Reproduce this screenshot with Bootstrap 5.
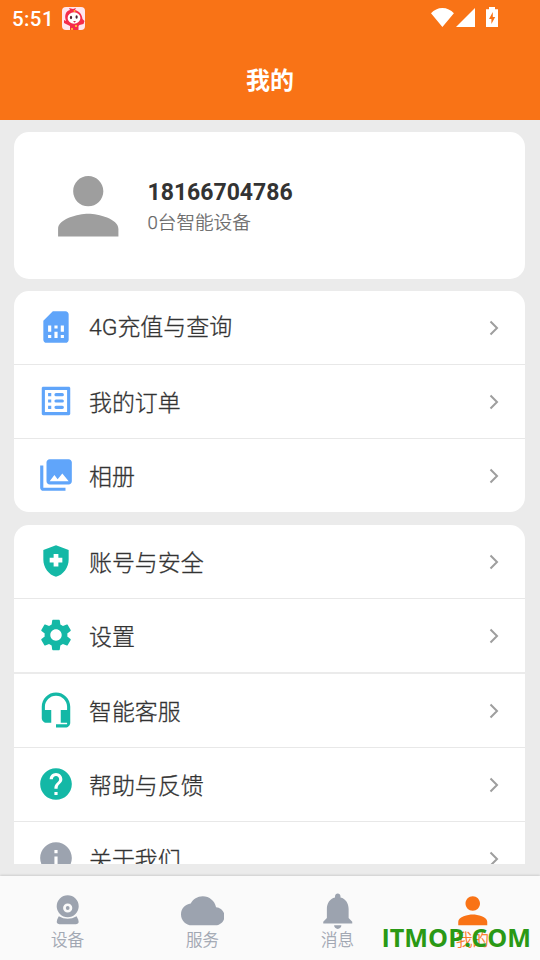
<!DOCTYPE html>
<html lang="zh-CN">
<head>
<meta charset="utf-8">
<meta name="viewport" content="width=device-width, initial-scale=1">
<title>我的</title>
<link href="https://cdn.jsdelivr.net/npm/bootstrap@5.3.0/dist/css/bootstrap.min.css" rel="stylesheet">
<style>
body{font-family:Roboto,"Noto Sans CJK SC",sans-serif;background:#ebebeb;color:#333;height:960px}
svg{display:block;fill:currentColor;flex:none}
.app-head{background:#f97316;height:120px}
.status-row{height:40px;padding:0 42px 0 12px}
.clock{font-size:20.5px;font-weight:500;line-height:38px;letter-spacing:.4px;width:50px}
.page-title{font-size:24px;font-weight:700;line-height:36px;padding-top:23px}
.scroll-area{height:756px;padding:12px 15px 12px 14px}
.panel{background:#fff;border-radius:15px}
.profile{height:147px;margin-bottom:12px;padding:1px 0 0 28.7px}
.profile svg{color:#9e9e9e}
.profile-text{margin:3px 0 0 14.3px}
.phone{font-size:23px;font-weight:700;line-height:30px}
.devices{font-size:18.6px;line-height:30px;color:#666;font-weight:300;-webkit-text-stroke:.25px #666}
.menu-a{height:221px;margin-bottom:13px}
.menu-b{height:339px;border-radius:15px 15px 0 0}
.menu-row{height:74px;flex:none;padding:0 26.5px 0 22.8px;border-bottom:1px solid #e8e8e8}
.menu-row.thick{height:75px;border-bottom-width:2px;border-color:#ebebeb}
.menu-row:last-child{border-color:transparent}
.menu-row svg.pic{margin-top:-1px}
.menu-row .label{font-size:22.95px;line-height:34px;margin:5px 0 0 14.2px;font-weight:300;-webkit-text-stroke:.3px #333}
.menu-a .menu-row:first-child .label{margin-top:1px}
.chev{fill:none;stroke:#9e9e9e;stroke-width:2;margin:1px 0 0 auto}
.blue{color:#60a5fa}
.teal{color:#14b8a6}
.slate{color:#9ca3af}
.tabs{height:84px;background:#fafafa;box-shadow:0 -1px 2px rgba(0,0,0,.12);padding-top:12.5px}
.tabs .tab{width:135px;font-size:16.5px;line-height:24px;color:#9ca3af;font-weight:300}
.tabs .tab span{margin-top:-3.5px;-webkit-text-stroke:.25px currentColor}
.tabs .tab.on{color:#f97316}
.stamp{right:9px;bottom:7px;font:700 25.2px/32px "Open Sans",sans-serif;color:#2a9915;white-space:nowrap}
</style>
</head>
<body class="overflow-hidden">
<header class="app-head text-white">
  <div class="status-row d-flex align-items-start">
    <span class="clock">5:51</span>
    <svg width="23" height="23" viewBox="0 0 23 23" style="margin-top:7px"><rect width="23" height="23" rx="4" fill="#ffe6ee"/><path fill="#f52c4b" d="M7 1l4 1 3-1-1 2c4 1 7 4 7.500 9l2 2-1 3-4 1-1 1v4H8v-4l-6-3 0-3 2 1C2 8 4 4 8 3z"/><ellipse cx="12" cy="11" rx="6.400" ry="5.800" fill="#fff"/><ellipse cx="9" cy="10.500" rx="1.100" ry="1.700" fill="#4b2532"/><ellipse cx="14.600" cy="10" rx="1.100" ry="1.700" fill="#4b2532"/><path d="M11 14h3l-1.400 1.800z" fill="#e0334b"/><circle cx="12.500" cy="4" r="1" fill="#ffb22e"/><path d="M9 21h2v2H9zM13 18h2v2h-2z" fill="#ffb22e"/></svg>
    <svg class="ms-auto" width="68" height="22" viewBox="0 0 68 22" style="margin-top:6px"><path d="M12.400 21L1 7.200C4 4 8 2 12.400 2S21 4 23.900 7.200zM45 2v19H26zM56 3.300h3V1h6v2.300h3V21H56z"/><path fill="#f97316" d="M62.800 6v5h2.400L61.400 18v-5H59z"/></svg>
  </div>
  <h1 class="page-title text-center m-0">我的</h1>
</header>
<main class="scroll-area overflow-hidden">
  <section class="panel profile d-flex align-items-center">
    <svg width="90.500" height="90.500" viewBox="0 0 24 24"><path d="M12 12c2.210 0 4-1.790 4-4s-1.790-4-4-4-4 1.790-4 4 1.790 4 4 4zm0 2c-2.670 0-8 1.340-8 4v2h16v-2c0-2.660-5.330-4-8-4z"/></svg>
    <div class="profile-text"><div class="phone">18166704786</div><div class="devices">0台智能设备</div></div>
  </section>
  <section class="panel menu-a d-flex flex-column overflow-hidden">
    <div class="menu-row d-flex align-items-center"><svg class="pic blue" width="38" height="38" viewBox="0 0 24 24"><path d="M19.990 4c0-1.100-.890-2-1.990-2h-8L4 8v12c0 1.100.9 2 2 2h12.010c1.100 0 1.990-.9 1.990-2l-.010-16zM9 19H7v-2h2v2zm8 0h-2v-2h2v2zm-8-4H7v-4h2v4zm4 4h-2v-4h2v4zm0-6h-2v-2h2v2zm4 2h-2v-4h2v4z"/></svg><span class="label">4G充值与查询</span><svg class="chev" width="10" height="16" viewBox="0 0 10 16"><path d="M1.500 1.500L8 8 1.500 14.500"/></svg></div>
    <div class="menu-row d-flex align-items-center"><svg class="pic blue" width="38" height="38" viewBox="0 0 24 24"><path d="M19 5v14H5V5h14m1.100-2H3.900c-.5 0-.9.4-.9.900v16.200c0 .4.4.9.900.9h16.200c.4 0 .9-.5.900-.9V3.900c0-.5-.5-.9-.900-.9zM12 7h4a1 1 0 010 2h-4a1 1 0 010-2zm0 4h4a1 1 0 010 2h-4a1 1 0 010-2zm0 4h4a1 1 0 010 2h-4a1 1 0 010-2zM7 7h2v2H7zm0 4h2v2H7zm0 4h2v2H7z"/></svg><span class="label">我的订单</span><svg class="chev" width="10" height="16" viewBox="0 0 10 16"><path d="M1.500 1.500L8 8 1.500 14.500"/></svg></div>
    <div class="menu-row d-flex align-items-center"><svg class="pic blue" width="38" height="38" viewBox="0 0 24 24"><path d="M22 16V4c0-1.100-.9-2-2-2H8c-1.100 0-2 .9-2 2v12c0 1.100.9 2 2 2h12c1.100 0 2-.9 2-2zm-11-4l2.030 2.710L16 11l4 5H8l3-4zM2 6v14c0 1.100.9 2 2 2h14v-2H4V6H2z"/></svg><span class="label">相册</span><svg class="chev" width="10" height="16" viewBox="0 0 10 16"><path d="M1.500 1.500L8 8 1.500 14.500"/></svg></div>
  </section>
  <section class="panel menu-b d-flex flex-column overflow-hidden">
    <div class="menu-row d-flex align-items-center"><svg class="pic teal" width="38" height="38" viewBox="0 0 24 24"><path d="M10.500 13H8v-3h2.500V7.500h3V10H16v3h-2.500v2.500h-3V13zM12 2L4 5v6.090c0 5.050 3.410 9.760 8 10.910 4.590-1.150 8-5.860 8-10.910V5l-8-3z" fill-rule="evenodd"/></svg><span class="label">账号与安全</span><svg class="chev" width="10" height="16" viewBox="0 0 10 16"><path d="M1.500 1.500L8 8 1.500 14.500"/></svg></div>
    <div class="menu-row thick d-flex align-items-center"><svg class="pic teal" width="38" height="38" viewBox="0 0 24 24"><path d="M19.140 12.940c.04-.3.060-.610.060-.940 0-.320-.020-.640-.070-.940l2.030-1.580c.180-.140.230-.410.120-.610l-1.920-3.320c-.120-.220-.370-.290-.590-.220l-2.390.960c-.5-.380-1.030-.7-1.620-.940l-.360-2.540c-.040-.240-.240-.410-.480-.410h-3.840c-.240 0-.430.170-.470.410l-.360 2.540c-.590.240-1.130.570-1.620.940l-2.390-.960c-.220-.080-.470 0-.590.220L2.740 8.870c-.120.210-.080.470.120.610l2.030 1.580c-.050.3-.090.630-.090.940s.020.640.070.940l-2.030 1.580c-.180.140-.230.410-.120.610l1.920 3.320c.120.220.370.290.590.220l2.390-.960c.5.380 1.030.7 1.620.940l.360 2.540c.050.240.240.410.480.410h3.840c.240 0 .440-.170.470-.410l.360-2.540c.590-.240 1.130-.560 1.620-.940l2.390.960c.220.080.470 0 .590-.220l1.920-3.320c.120-.220.070-.470-.120-.610l-2.010-1.580zM12 15.600c-1.980 0-3.600-1.620-3.600-3.600s1.620-3.600 3.600-3.600 3.600 1.620 3.600 3.600-1.620 3.600-3.600 3.600z"/></svg><span class="label">设置</span><svg class="chev" width="10" height="16" viewBox="0 0 10 16"><path d="M1.500 1.500L8 8 1.500 14.500"/></svg></div>
    <div class="menu-row d-flex align-items-center"><svg class="pic teal" width="38" height="38" viewBox="0 0 24 24"><path d="M12 1c-4.970 0-9 4.030-9 9v7c0 1.660 1.340 3 3 3h3v-8H5v-2c0-3.870 3.130-7 7-7s7 3.130 7 7v2h-4v8h4v1h-7v2h6c1.660 0 3-1.340 3-3V10c0-4.970-4.030-9-9-9z"/></svg><span class="label">智能客服</span><svg class="chev" width="10" height="16" viewBox="0 0 10 16"><path d="M1.500 1.500L8 8 1.500 14.500"/></svg></div>
    <div class="menu-row d-flex align-items-center"><svg class="pic teal" width="38" height="38" viewBox="0 0 24 24"><path d="M12 2C6.480 2 2 6.480 2 12s4.480 10 10 10 10-4.480 10-10S17.520 2 12 2zm1 17h-2v-2h2v2zm2.070-7.750l-.9.920C13.450 12.900 13 13.500 13 15h-2v-.5c0-1.100.450-2.100 1.170-2.830l1.240-1.260c.370-.360.590-.860.590-1.410 0-1.100-.9-2-2-2s-2 .9-2 2H8c0-2.210 1.790-4 4-4s4 1.790 4 4c0 .880-.360 1.680-.930 2.250z"/></svg><span class="label">帮助与反馈</span><svg class="chev" width="10" height="16" viewBox="0 0 10 16"><path d="M1.500 1.500L8 8 1.500 14.500"/></svg></div>
    <div class="menu-row d-flex align-items-center"><svg class="pic slate" width="38" height="38" viewBox="0 0 24 24"><path d="M12 2C6.480 2 2 6.480 2 12s4.480 10 10 10 10-4.480 10-10S17.520 2 12 2zm1 15h-2v-6h2v6zm0-8h-2V7h2v2z"/></svg><span class="label">关于我们</span><svg class="chev" width="10" height="16" viewBox="0 0 10 16"><path d="M1.500 1.500L8 8 1.500 14.500"/></svg></div>
  </section>
</main>
<nav class="tabs d-flex position-relative">
  <div class="tab d-flex flex-column align-items-center"><svg width="43.500" height="43.500" viewBox="0 0 43.500 43.500"><path fill-rule="evenodd" d="M21.700 6.200a11 11 0 100 22 11 11 0 000-22zm0 8.200a4.600 4.600 0 110 9.200 4.600 4.600 0 010-9.200z"/><circle cx="21.700" cy="19" r="1.900"/><path d="M12.800 27.200q8.900 5 17.800 0l1.600 3.400q1.400 4.600-2.200 4.600H13.400q-3.600 0-2.200-4.600z"/></svg><span>设备</span></div>
  <div class="tab d-flex flex-column align-items-center"><svg width="43.500" height="43.500" viewBox="0 0 24 24"><path d="M19.350 10.040C18.670 6.590 15.640 4 12 4 9.110 4 6.600 5.640 5.350 8.040 2.340 8.360 0 10.910 0 14c0 3.310 2.690 6 6 6h13c2.760 0 5-2.240 5-5 0-2.640-2.050-4.780-4.650-4.960z"/></svg><span>服务</span></div>
  <div class="tab d-flex flex-column align-items-center"><svg width="43.500" height="43.500" viewBox="0 0 24 24"><path d="M12 22c1.100 0 2-.9 2-2h-4c0 1.100.890 2 2 2zm6-6v-5c0-3.070-1.640-5.640-4.500-6.320V4c0-.830-.670-1.500-1.500-1.500s-1.500.670-1.500 1.500v.680C7.630 5.360 6 7.920 6 11v5l-2 2v1h16v-1l-2-2z"/></svg><span>消息</span></div>
  <div class="tab on d-flex flex-column align-items-center"><svg width="43.500" height="43.500" viewBox="0 0 24 24"><path d="M12 12c2.210 0 4-1.790 4-4s-1.790-4-4-4-4 1.790-4 4 1.790 4 4 4zm0 2c-2.670 0-8 1.340-8 4v2h16v-2c0-2.660-5.330-4-8-4z"/></svg><span>我的</span></div>
  <div class="stamp position-absolute">ITMOP.COM</div>
</nav>
<script src="https://cdn.jsdelivr.net/npm/bootstrap@5.3.0/dist/js/bootstrap.bundle.min.js"></script>
</body>
</html>
